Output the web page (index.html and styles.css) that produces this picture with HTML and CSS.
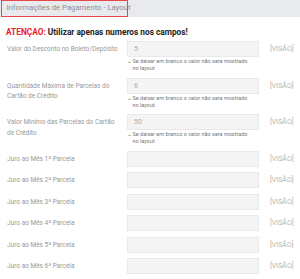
FILE: index.html
```html
<!DOCTYPE html>
<html lang="pt">
<head>
<meta charset="utf-8">
<link rel="stylesheet" href="styles.css">
</head>
<body>
<div class="header">
  <div class="tab">Informações de Pagamento - Layout</div>
</div>
<div class="alert"><span class="red">ATENÇAO:</span> Utilizar apenas numeros nos campos!</div>
<div class="form">
  <div class="row">
    <div class="label">Valor do Desconto no Boleto/Depósito</div>
    <div class="field">
      <div class="input">5</div>
      <div class="help"><span class="ico">▲</span><span>Se deixar em branco o valor não sera mostrado no layout</span></div>
    </div>
    <div class="visao">[VISÃO]</div>
  </div>
  <div class="row">
    <div class="label">Quantidade Máxima de Parcelas do Cartão de Crédito</div>
    <div class="field">
      <div class="input">6</div>
      <div class="help"><span class="ico">▲</span><span>Se deixar em branco o valor não sera mostrado no layout</span></div>
    </div>
    <div class="visao">[VISÃO]</div>
  </div>
  <div class="row">
    <div class="label">Valor Mínimo das Parcelas do Cartão de Crédito</div>
    <div class="field">
      <div class="input">50</div>
      <div class="help"><span class="ico">▲</span><span>Se deixar em branco o valor não sera mostrado no layout</span></div>
    </div>
    <div class="visao">[VISÃO]</div>
  </div>
  <div class="row short">
    <div class="label">Juro ao Mês 1ª Parcela</div>
    <div class="field"><div class="input"></div></div>
    <div class="visao">[VISÃO]</div>
  </div>
  <div class="row short">
    <div class="label">Juro ao Mês 2ª Parcela</div>
    <div class="field"><div class="input"></div></div>
    <div class="visao">[VISÃO]</div>
  </div>
  <div class="row short">
    <div class="label">Juro ao Mês 3ª Parcela</div>
    <div class="field"><div class="input"></div></div>
    <div class="visao">[VISÃO]</div>
  </div>
  <div class="row short">
    <div class="label">Juro ao Mês 4ª Parcela</div>
    <div class="field"><div class="input"></div></div>
    <div class="visao">[VISÃO]</div>
  </div>
  <div class="row short">
    <div class="label">Juro ao Mês 5ª Parcela</div>
    <div class="field"><div class="input"></div></div>
    <div class="visao">[VISÃO]</div>
  </div>
  <div class="row short">
    <div class="label">Juro ao Mês 6ª Parcela</div>
    <div class="field"><div class="input"></div></div>
    <div class="visao">[VISÃO]</div>
  </div>
</div>
</body>
</html>
```
FILE: styles.css
```css
html, body {
  margin: 0;
  padding: 0;
  background: #fff;
  font-family: Roboto, "Liberation Sans", sans-serif;
  overflow: hidden;
}
.header {
  height: 17px;
  background: #e9eaee;
  padding-left: 1px;
  display: flex;
}
.tab {
  box-sizing: border-box;
  width: 127px;
  height: 17px;
  border: 1.5px solid #e8474c;
  color: #8f8f8f;
  font-size: 7.7px;
  line-height: 14px;
  padding-left: 4.5px;
  white-space: nowrap;
}
.alert {
  margin-top: 9px;
  padding-left: 6px;
  font-size: 8.3px;
  font-weight: bold;
  color: #222;
  line-height: 12px;
  white-space: nowrap;
}
.red { color: #ec2229; }
.form {
  margin-top: 3px;
}
.row {
  display: grid;
  grid-template-columns: 120px 132px 1fr;
  padding-left: 7px;
  margin-bottom: 5.5px;
}
.short { margin-bottom: 5.6px; }
.label {
  font-size: 6.5px;
  color: #999;
  line-height: 10.5px;
  padding-top: 3px;
  padding-right: 4px;
}
.input {
  box-sizing: border-box;
  height: 16px;
  background: #f4f4f4;
  border: 1px solid #e9e9e9;
  font-size: 7px;
  color: #aaa;
  line-height: 14px;
  padding-left: 6px;
}
.help {
  display: flex;
  gap: 1.5px;
  font-size: 5.5px;
  line-height: 7px;
  color: #777;
  padding-top: 1px;
  padding-right: 6px;
}
.ico {
  font-size: 3px;
  line-height: 7px;
  padding-top: 1px;
  padding-left: 1px;
}
.visao {
  font-size: 7px;
  color: #b3b3b3;
  line-height: 16px;
  padding-left: 11px;
  white-space: nowrap;
}
```
